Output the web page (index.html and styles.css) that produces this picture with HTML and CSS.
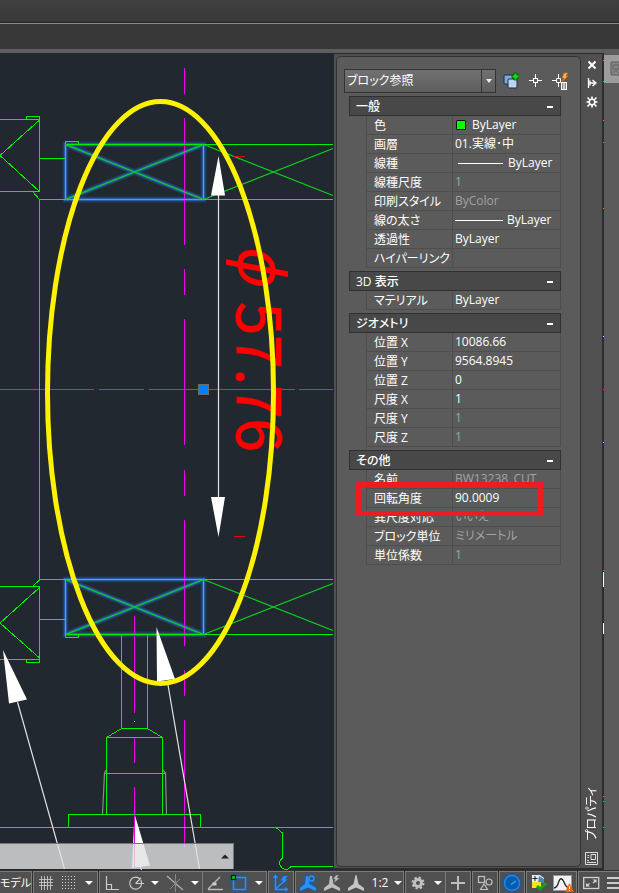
FILE: index.html
```html
<!DOCTYPE html>
<html lang="ja">
<head>
<meta charset="utf-8">
<title>プロパティ</title>
<link rel="stylesheet" href="styles.css">
</head>
<body>
<div class="ribbon"></div>
<div class="tabs"></div>
<main class="workspace">
  <section class="canvas">
    <svg class="drawing" viewBox="0 53 334 817" preserveAspectRatio="xMaxYMin slice">
      <!-- selection glow -->
      <g class="glow-wide"><path d="M65.500 144.500H203.500V199.500H65.500ZL203.500 199.500M203.500 144.500L65.500 199.500M65.500 579.500H203.500V634.500H65.500ZL203.500 634.500M203.500 579.500L65.500 634.500"/></g>
      <g class="glow"><path d="M65.500 144.500H203.500V199.500H65.500ZL203.500 199.500M203.500 144.500L65.500 199.500M65.500 579.500H203.500V634.500H65.500ZL203.500 634.500M203.500 579.500L65.500 634.500"/></g>
      <!-- centre lines -->
      <g class="magenta">
        <path d="M184.500 68V94M184.500 118V245M184.500 269V295M184.500 319V445M184.500 470V496M184.500 520V646M184.500 670V696M184.500 720V847"/>
        <path d="M134.500 616V713M134.500 737V763M134.500 787V869"/>
        <path d="M0 389.500H94M99 389.500H144M149 389.500H295M299 389.500H333"/>
      </g>
      <!-- part outlines -->
      <g class="green">
        <path d="M0 119.500H39.500V191.500H0M26.500 119V116.500H39.500V120L0 155.500L39.500 191.500M33 192L39.500 199.500V580L32 587M39.500 158.500H65M39.500 199.500H333M65.500 144V141.500H78.500V144M65.500 144.500H333M65.500 144.500V199.500M203.500 144.500V199.500"/>
        <path d="M0 586.500H39.500V659.500H0M26.500 659V662.500H39.500V658L0 623L39.500 587.500M39.500 619.500H65M39.500 579.500H333M65.500 634.500H333M65.500 579.500V634.500M203.500 579.500V634.500M65.500 634V637.500H78.500V634"/>
        <path d="M121.500 635V728.500H147.500V635M121.500 728.500L106.500 737.500H162.500L147.500 728.500M106.500 737.500V814M162.500 737.500V814M104 773.500H165M68.500 827V814.500H200.500V827M0 827.500H333M276 827.500L282.500 833V858Q278 861 280.500 866Q285 873 291 866.500H333"/>
      </g>
      <g class="green-thin"><path d="M65.500 144.500L203.500 199.500M203.500 144.500L65.500 199.500M65.500 579.500L203.500 634.500M203.500 579.500L65.500 634.500M203.500 144.500L333 195.500M203.500 199.500L333 148.500M203.500 579.500L333 630.500M203.500 634.500L333 583.500"/></g>
      <path class="grey" d="M106 770L104.500 773L102.500 814M163 770L165.500 773L166.500 814"/>
      <!-- dimension and leaders -->
      <path class="white" d="M218.500 195V497M17.500 702L64.500 869M167.500 682L199.500 869M140 866L141.500 870"/>
      <path class="white-fill" d="M218.500 156L225 195.500H211ZM218.500 537L225 497H211ZM3 650L9 703.500L27 699.500ZM156.500 627L157 681.500L175 679ZM134.500 814L132 868L150 865.500ZM134 721h1v1h-1z"/>
      <path class="red" d="M234 156.500H245M234 536.500H245"/>
      <g transform="translate(237 247) rotate(90)">
        <text class="dim-symbol" x="0" y="-2">ϕ</text>
        <text class="dim" x="55" y="0">57.76</text>
      </g>
      <path class="magenta" d="M134.500 814V869"/>
      <rect class="grip" x="198.500" y="384.500" width="10" height="10"/>
      <ellipse class="marker" cx="160.500" cy="392.500" rx="113" ry="291"/>
    </svg>
    <button class="command" aria-label="コマンド履歴"><svg width="8" height="5" viewBox="0 0 8 5"><path d="M0 4.500L4 .5L8 4.500Z" fill="#222"/></svg></button>
  </section>

  <aside class="palette">
    <div class="panel">
      <div class="toolbar">
        <label class="picker"><select aria-label="オブジェクト"><option>ブロック参照</option></select><span class="picker-arrow"></span></label>
        <button aria-label="追加選択"><svg width="16" height="18" viewBox="0 0 16 18"><rect x="1" y="3" width="9" height="9" rx="1" fill="#7da7d8" stroke="#182c46"/><rect x="5" y="7" width="9" height="9" rx="1" fill="#bcd6f2" stroke="#182c46"/><path d="M11 1h3v2h2v3h-2v2h-3V6H9V3h2z" fill="#12d812" stroke="#075207" stroke-width=".8"/></svg></button>
        <button aria-label="オブジェクト選択"><svg width="14" height="14" viewBox="0 0 14 14" fill="none" stroke="#fff"><rect x="4.500" y="4.500" width="4" height="4"/><path d="M6.500 0V4M6.500 9V13M0 6.500H4M9 6.500H13"/></svg></button>
        <button aria-label="クイック選択"><svg width="17" height="18" viewBox="0 0 17 18" fill="none"><path d="M6.500 2V6M6.500 10V15M0 8.500H4M4.500 6.500H8.500V10.500H4.500Z" stroke="#fff"/><path d="M12 1h4l-2 3h2l-6 6l2-4h-2z" fill="#ffb23e" stroke="#d25d13" stroke-width=".7"/><rect x="9" y="10" width="6" height="8" fill="#fff"/><path d="M10 12h1.500M12.500 12H14M10 14h1.500M12.500 14H14M10 16h1.500M12.500 16H14" stroke="#222"/></svg></button>
      </div>

      <div class="properties">
        <section class="group">
          <h2>一般<button aria-label="一般を折りたたむ"></button></h2>
          <table>
            <tr><th>色</th><td><span class="line"><i class="swatch"></i>ByLayer</span></td></tr>
            <tr><th>画層</th><td>01.実線･中</td></tr>
            <tr><th>線種</th><td><span class="line"><i class="rule inset"></i>ByLayer</span></td></tr>
            <tr><th>線種尺度</th><td class="off">1</td></tr>
            <tr><th>印刷スタイル</th><td class="off">ByColor</td></tr>
            <tr><th>線の太さ</th><td><span class="line"><i class="rule"></i>ByLayer</span></td></tr>
            <tr><th>透過性</th><td>ByLayer</td></tr>
            <tr><th>ハイパーリンク</th><td></td></tr>
          </table>
        </section>
        <section class="group">
          <h2>3D 表示<button aria-label="3D 表示を折りたたむ"></button></h2>
          <table><tr><th>マテリアル</th><td>ByLayer</td></tr></table>
        </section>
        <section class="group">
          <h2>ジオメトリ<button aria-label="ジオメトリを折りたたむ"></button></h2>
          <table>
            <tr><th>位置 X</th><td>10086.66</td></tr>
            <tr><th>位置 Y</th><td>9564.8945</td></tr>
            <tr><th>位置 Z</th><td>0</td></tr>
            <tr><th>尺度 X</th><td>1</td></tr>
            <tr><th>尺度 Y</th><td class="off">1</td></tr>
            <tr><th>尺度 Z</th><td class="off">1</td></tr>
          </table>
        </section>
        <section class="group">
          <h2>その他<button aria-label="その他を折りたたむ"></button></h2>
          <table>
            <tr><th>名前</th><td class="off">BW13238_CUT</td></tr>
            <tr><th>回転角度</th><td>90.0009</td></tr>
            <tr><th>異尺度対応</th><td class="off">いいえ</td></tr>
            <tr><th>ブロック単位</th><td class="off">ミリメートル</td></tr>
            <tr><th>単位係数</th><td class="off">1</td></tr>
          </table>
          <div class="callout"></div>
        </section>
      </div>
    </div>
    <div class="side">
      <button aria-label="閉じる"><svg width="10" height="10" viewBox="0 0 10 10"><path d="M1.500 1.500L8.500 8.500M8.500 1.500L1.500 8.500" stroke="#fff" stroke-width="2"/></svg></button>
      <button aria-label="自動的に隠す"><svg width="10" height="10" viewBox="0 0 10 10"><path d="M1.500 0V10M3 2.500V7.500M3 5H8" stroke="#fff" stroke-width="1.300"/><path d="M5.500 2L9 5L5.500 8" fill="none" stroke="#fff" stroke-width="1.400"/></svg></button>
      <button aria-label="プロパティ設定"><svg width="12" height="12" viewBox="0 0 12 12"><circle cx="6" cy="6" r="2.800" fill="none" stroke="#fff" stroke-width="1.600"/><path d="M6 3V.5M6 9V11.500M3 6H.5M9 6H11.500M4 4L1.500 1.500M8 4L10.500 1.500M4 8L1.500 10.500M8 8L10.500 10.500" stroke="#fff" stroke-width="1.600"/></svg></button>
      <span class="side-title">プロパティ</span>
      <svg width="13" height="13" viewBox="0 0 13 13" fill="none" stroke="#ddd"><path d="M.5.5H12.500V12.500H.5ZM2 8.500H4M2 10.500H11M2.500 3.500H4M6 2.500H10.500V7.500H6ZM2.500 5.500H4"/></svg>
    </div>
  </aside>
  <div class="dock">
    <svg class="dock-edge" width="1" height="817" viewBox="0 53 1 817"><path d="M0 60h1v1H0zM0 81h1v1H0zM0 120h1v1H0zM0 142h1v1H0zM0 208h1v1H0zM0 570h1v1H0zM0 796h1v1H0zM0 801h1v1H0zM0 827h1v1H0z" fill="#0e0"/><path d="M0 336h1v1H0zM0 442h1v1H0z" fill="#ff0"/><path d="M0 389h1v1H0z" fill="#f0f"/><path d="M0 572h1v15H0zM0 623h1v11H0z" fill="#fff"/></svg>
    <div class="dock-tile"><svg width="10" height="15" viewBox="0 0 10 15"><rect x="1" y="1" width="14" height="13" rx="1" fill="#858585" stroke="#5b5b5b"/><path d="M3 4H9V8H3ZM3 12L6 9L9 12" fill="none" stroke="#636363"/></svg></div>
  </div>
</main>

<footer class="status">
  <div class="set model"><button>モデル</button></div>
  <div class="set">
    <button class="w23" aria-label="グリッド"><svg width="16" height="16" viewBox="0 0 16 16" stroke="#c8c8c8" stroke-width=".9"><path d="M3.500 1V15M6.500 1V15M9.500 1V15M12.500 1V15M1 4.500H15M1 7.500H15M1 10.500H15"/></svg></button>
    <button class="w23" aria-label="スナップ"><svg width="16" height="16" viewBox="0 0 16 16" stroke="#d4d4d4" stroke-dasharray="1 2"><path d="M1 1.500H15M1 4.500H15M1 7.500H15M1 10.500H15M1 13.500H15"/></svg></button>
    <button class="w17 drop" aria-label="スナップ設定"></button>
  </div>
  <div class="set">
    <button class="w24" aria-label="直交"><svg width="16" height="16" viewBox="0 0 16 16" fill="none" stroke="#ccc" stroke-width="1.200"><path d="M2.500 1V14.500H15M2.500 9.500H7.500V14"/></svg></button>
    <button class="w24" aria-label="極"><svg width="16" height="16" viewBox="0 0 16 16" fill="none" stroke="#ccc" stroke-width="1.200"><path d="M13 11A6 6 0 1 1 12 4M7.500 8.500L13 3M7.500 8.500H16M13 5Q14 8 13 11"/></svg></button>
    <button class="w14 drop" aria-label="極設定"></button>
    <button class="w26" aria-label="アイソメ"><svg width="18" height="18" viewBox="0 0 18 18" fill="none"><path d="M1 2L17 16" stroke="#aaa" stroke-width="1.500"/><path d="M9.500 0V18M4 15L14 5" stroke="#888"/></svg></button>
    <button class="w14 drop" aria-label="アイソメ設定"></button>
    <i class="bar"></i>
    <button class="w24" aria-label="追跡"><svg width="16" height="16" viewBox="0 0 16 16" fill="none" stroke="#bbb" stroke-width="1.300"><path d="M1 14.500H16M1 14L13 2"/><path d="M5.500 7.500h4v3h-4z" fill="#ccc" stroke="none"/></svg></button>
    <button class="w24 on" aria-label="オブジェクトスナップ"><svg width="18" height="18" viewBox="0 0 18 18"><rect x="3.500" y="3.500" width="12" height="12" fill="none" stroke="#2493ff" stroke-width="1.500"/><rect x="1.500" y="1.500" width="4" height="4" fill="#00c800" stroke="#002800" stroke-width="1.200"/></svg></button>
    <button class="w15 drop" aria-label="スナップモード"></button>
  </div>
  <div class="set"><button class="w24 on" aria-label="ダイナミック UCS"><svg width="18" height="18" viewBox="0 0 18 18"><path d="M3.500 2V15.500H15M1.500 4L3.500 1.500L5.500 4M13 13.500L15.500 15.500L13 17M3.500 15L10 9" fill="none" stroke="#2493ff" stroke-width="1.300"/><path d="M12 2L8.500 6.500H11L9 11L15.500 5.500H13L15.500 2Z" fill="#2493ff"/></svg></button></div>
  <div class="set">
    <button class="w24 on" aria-label="注釈の表示"><svg width="18" height="18" viewBox="0 0 18 18"><path d="M7 2H9L10.500 10L17 14V17L9 13.500L1 17V14L6 10Z" fill="#2493ff"/><circle cx="12.500" cy="4.500" r="2.500" fill="#365472" stroke="#2493ff" stroke-width="1.400"/></svg></button>
    <button class="w24" aria-label="注釈の自動追加"><svg width="18" height="18" viewBox="0 0 18 18" fill="#bebebe"><path d="M7 2H9L10.500 10L17 14V17L9 13.500L1 17V14L6 10Z"/><path d="M13 1L10 5H12L11 9L17 4H14L16 1Z" stroke="#505050" stroke-width=".5"/></svg></button>
    <button class="w24" aria-label="注釈尺度"><svg width="18" height="18" viewBox="0 0 18 18" fill="#c4c4c4"><path d="M8.500 1H9.500L11.500 10L17 14V17L9 13.500L1 17V14L6.500 10Z"/></svg></button>
    <button class="w24 scale">1:2</button>
    <button class="w11 drop" aria-label="尺度一覧"></button>
  </div>
  <div class="set">
    <button class="w24" aria-label="ワークスペース"><svg width="14" height="14" viewBox="0 0 14 14"><circle cx="7" cy="7" r="3.500" fill="none" stroke="#c0c0c0" stroke-width="3"/><circle cx="7" cy="7" r="5.500" fill="none" stroke="#c0c0c0" stroke-width="2" stroke-dasharray="2.300 2.020"/></svg></button>
    <button class="w15 drop" aria-label="ワークスペース一覧"></button>
    <i class="bar"></i>
    <button class="w24" aria-label="注釈モニター"><svg width="14" height="14" viewBox="0 0 14 14"><path d="M7 0V14M0 7H14" stroke="#bebebe" stroke-width="2"/></svg></button>
  </div>
  <div class="set"><button class="w24" aria-label="選択表示"><svg width="16" height="16" viewBox="0 0 16 16" fill="none" stroke="#c2c2c2" stroke-width="1.200"><rect x="1.500" y="1.500" width="6" height="6"/><circle cx="12" cy="7" r="3"/><path d="M3.500 14.500L7 9L10.500 14.500Z"/></svg></button></div>
  <div class="set"><button class="w24 on" aria-label="ハードウェア アクセラレーション"><svg width="18" height="18" viewBox="0 0 18 18"><circle cx="9" cy="9" r="7.500" fill="#075ca8" stroke="#168cff" stroke-width="1.300"/><path d="M8 10.500L13 7" stroke="#36a0ff" stroke-width="1.500"/></svg></button></div>
  <div class="set">
    <button class="w24" aria-label="図面状態"><svg width="18" height="18" viewBox="0 0 18 18"><path d="M2 1H10L14 4V9H2Z" fill="#e4edf6"/><path d="M9 2L14 5V9H8Z" fill="#4a83b8"/><path d="M2 8H11V14H2Z" fill="#ffe11d"/><path d="M5 2V7M2.500 4.500H7.500" stroke="#222"/><path d="M7 12L10 15L16 9" fill="none" stroke="#1b9c22" stroke-width="3"/></svg></button>
    <button class="w25" aria-label="性能"><svg width="22" height="18" viewBox="0 0 22 18"><rect x=".5" y="1.500" width="18" height="15" fill="#f2f2f2" stroke="#999"/><path d="M1 14Q4 14 6 7Q8 2 11 8Q13 14 17 14" fill="none" stroke="#222" stroke-width="1.300"/><path d="M16.500 9L21 18H12Z" fill="#f0660d"/><path d="M16.500 12V15M16.500 16V17" stroke="#fff"/></svg></button>
  </div>
  <div class="set last">
    <button class="w24" aria-label="フルスクリーン"><svg width="17" height="14" viewBox="0 0 17 14" fill="none" stroke="#d0d0d0"><rect x=".7" y="1.500" width="15" height="11" stroke-width="1.300"/><path d="M10 7L13 4.500M6.500 7.500L3.500 10" stroke-width="1.500"/><path d="M9.500 3.500H13.500V7ZM3 7V10.500H7Z" fill="#d0d0d0" stroke="none"/></svg></button>
    <button class="w20" aria-label="カスタマイズ"><svg width="12" height="14" viewBox="0 0 12 14"><path d="M0 2H12M0 7H12M0 12H12" stroke="#ccc" stroke-width="2"/></svg></button>
  </div>
</footer>
</body>
</html>
```
FILE: styles.css
```css
* { box-sizing: border-box; }
body {
  margin: 0;
  min-height: 100vh;
  display: flex;
  flex-direction: column;
  overflow: hidden;
  background: #212830;
  color: #fff;
  font: 12px/18px "Open Sans", "Noto Sans CJK JP", sans-serif;
  font-feature-settings: "palt";
}
button { display: flex; align-items: center; justify-content: center; flex: none; padding: 0; border: 0; background: none; color: inherit; font: inherit; }
svg { display: block; flex: none; }

.ribbon { height: 24px; background: linear-gradient(#404040, #383838); border-bottom: 1px solid #8a8a8a; box-shadow: inset 0 -1px #262626; }
.tabs { height: 29px; background: #383838; border-bottom: 4px solid #5e5e5e; }

.workspace { flex: 1; display: grid; grid-template-columns: minmax(0, 1fr) 270px 15px; }
.canvas { position: relative; overflow: hidden; background: #212830; }
.drawing { position: absolute; inset: 0; width: 100%; height: 100%; fill: none; }
.green { stroke: #00f000; shape-rendering: crispEdges; }
.green-thin { stroke: #0cd41c; stroke-width: 1.2; }
.magenta { stroke: #f000f0; shape-rendering: crispEdges; }
.grey { stroke: #8a8a8a; stroke-width: 1.2; }
.white { stroke: #e4e4e4; stroke-width: 1.2; }
.white-fill { fill: #fff; }
.red { stroke: #f00000; shape-rendering: crispEdges; }
.glow-wide { stroke: #24487c; stroke-width: 6; opacity: .6; }
.glow { stroke: #2865b4; stroke-width: 3; opacity: .8; }
.grip { fill: #0080ff; stroke: #6c6c70; }
.marker { stroke: #fff200; stroke-width: 5; }
.dim { fill: #f00; stroke: #f00; stroke-width: 1; font: 60px "Noto Sans CJK JP", sans-serif; }
.dim-symbol { fill: #f00; font: oblique 64px "DejaVu Sans", sans-serif; }
.command {
  position: absolute;
  left: 0;
  bottom: 1px;
  width: 70%;
  height: 26px;
  justify-content: flex-end;
  padding-right: 4px;
  background: rgba(226, 226, 226, .8);
  border: solid #777;
  border-width: 1px 1px 0 0;
}

.palette { display: flex; background: #505050; border-top: 1px solid #2c2c2c; border-right: 2px solid #2b2d31; border-bottom: 2px solid #2c2c2c; padding: 2px 0 1px 2px; }
.panel { flex: 1; background: #5b5b5b; border: 1px solid #343434; border-radius: 5px; padding: 12px 0 0 7px; }
.toolbar { display: flex; align-items: center; height: 24px; }
.toolbar button { width: 25px; }
.picker { position: relative; display: flex; width: 152px; margin-right: 2px; }
.picker select {
  appearance: none;
  width: 100%;
  height: 24px;
  padding: 0 18px 0 2px;
  border: 1px solid #343434;
  border-radius: 0;
  background: linear-gradient(#717171, #5d5d5d);
  color: #fff;
  font: inherit;
}
.picker-arrow { position: absolute; top: 1px; right: 1px; bottom: 1px; width: 14px; border-left: 1px solid #383838; display: flex; align-items: center; justify-content: center; pointer-events: none; }
.picker-arrow::after { content: ""; border: solid transparent; border-width: 4px 3px 0; border-top-color: #eee; }

.properties { margin: 3px 19px 0 5px; display: flex; flex-direction: column; gap: 3px; }
.group { position: relative; }
h2 {
  display: flex;
  align-items: center;
  justify-content: space-between;
  height: 20px;
  margin: 0;
  padding: 1px 7px 0 6px;
  border: 1px solid #303030;
  background: #484848;
  font-size: 12px;
  font-weight: 500;
}
h2 button { width: 6px; height: 12px; }
h2 button::before { content: ""; width: 6px; height: 2px; background: #fff; }
table { width: calc(100% - 17px); margin-left: 17px; border-collapse: separate; border-spacing: 0; table-layout: fixed; }
th, td { height: 19px; padding: 0; border: solid #4e4e4e; border-width: 0 1px 1px 0; font-weight: 400; line-height: 18px; white-space: nowrap; text-align: left; }
th { width: 87px; padding: 2px 0 0 7px; border-left-width: 1px; line-height: 16px; }
td { padding-left: 2px; }
.off { color: #a2a2a2; }
.line { display: flex; align-items: center; height: 18px; }
.swatch { width: 10px; height: 10px; margin: 0 6px 0 1px; background: #0f0; border: 1px solid #111; border-radius: 1px; }
.rule { width: 48px; height: 1px; margin-right: 4px; background: #fff; }
.rule.inset { width: 45px; margin: 0 5px 0 3px; }
.callout { position: absolute; left: 7px; top: 32px; width: 187px; height: 34px; border: 5px solid #ed1c24; }

.side { width: 21px; display: flex; flex-direction: column; align-items: center; padding-bottom: 2px; }
.side button { width: 19px; height: 19px; }
.side button:first-child { height: 17px; }
.side-title { margin: auto 0 12px; writing-mode: vertical-rl; text-orientation: sideways; transform: rotate(180deg); }
.dock { position: relative; background: #5b5b5b; padding-top: 2px; }
.dock-edge { position: absolute; top: 0; left: -1px; }
.dock-tile { height: 28px; padding: 6px 0 0 6px; background: #9c9c9c; overflow: hidden; }

.status { display: flex; gap: 1px; height: 23px; padding-top: 1px; background: #303030; overflow: hidden; }
.set { display: flex; flex: none; height: 24px; background: #505050; border: 1px solid #7b7b7b; }
.model { width: 32px; border-left: 0; justify-content: center; }
.model button { height: 22px; font-size: 11px; }
.last { flex: 1 0 44px; border-right: 0; }
.bar { width: 1px; background: #7b7b7b; }
.w11 { width: 11px; } .w14 { width: 14px; } .w15 { width: 15px; } .w17 { width: 17px; }
.w20 { width: 20px; } .w23 { width: 23px; } .w24 { width: 24px; } .w25 { width: 25px; } .w26 { width: 26px; }
.drop::before { content: ""; border: solid transparent; border-width: 4px 4px 0; border-top-color: #fff; }
.on svg { filter: drop-shadow(0 0 2px #0a5cc0); }
```
